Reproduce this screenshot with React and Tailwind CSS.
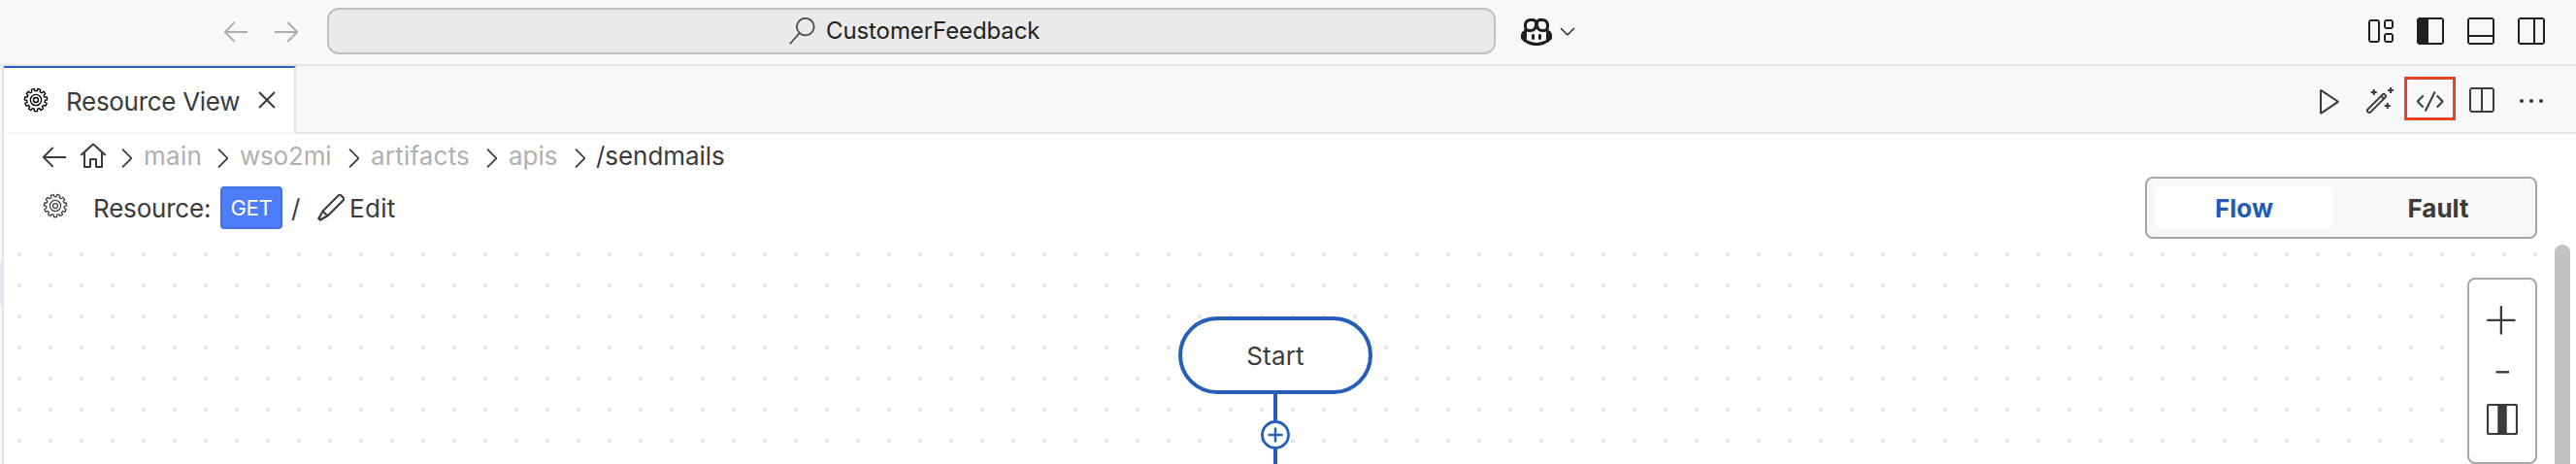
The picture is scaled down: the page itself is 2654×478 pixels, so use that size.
import React from "react";
import {
  VscArrowLeft,
  VscArrowRight,
  VscSearch,
  VscCopilot,
  VscChevronDown,
  VscChevronRight,
  VscLayout,
  VscLayoutSidebarLeft,
  VscLayoutPanelOff,
  VscLayoutSidebarRightOff,
  VscPlay,
  VscWand,
  VscCode,
  VscSplitHorizontal,
  VscEllipsis,
  VscClose,
  VscHome,
  VscEdit,
  VscAdd,
} from "react-icons/vsc";

const TEETH = 11;

// Closed outline of a cog wheel with its first gap at twelve o'clock.
function cogOutline(outer, root) {
  const step = (Math.PI * 2) / TEETH;
  const points = [];
  for (let i = 0; i < TEETH; i++) {
    const middle = -Math.PI / 2 + step * (i + 0.5);
    [
      [-0.3, root],
      [-0.22, outer],
      [0.22, outer],
      [0.3, root],
    ].forEach(([offset, radius]) => {
      const angle = middle + step * offset;
      points.push(`${(14 + radius * Math.cos(angle)).toFixed(2)} ${(14 + radius * Math.sin(angle)).toFixed(2)}`);
    });
  }
  return `M${points.join("L")}Z`;
}

function Gear({ className, stroke }) {
  return (
    <svg viewBox="0 0 28 28" className={className} fill="none" stroke="currentColor" strokeWidth={stroke} strokeLinejoin="round">
      <path d={cogOutline(11.7, 9.4)} />
      <circle cx="14" cy="14" r="5.6" />
      <circle cx="14" cy="14" r="2.5" />
    </svg>
  );
}

function TitleBar() {
  return (
    <header className="flex h-[68px] shrink-0 items-center border-b-2 border-[#e5e5e5] bg-[#f8f8f8] pb-0.5 pl-[227px] text-[#1f1f1f]">
      <VscArrowLeft className="size-8 text-[#adadad]" />
      <VscArrowRight className="ml-5 size-8 text-[#adadad]" />
      <div className="ml-[26px] flex h-12 w-[1204px] items-center rounded-xl border-2 border-[#c1c1c1] bg-[#eaeaea] pl-[473px]">
        <VscSearch className="size-7 text-[#4a4a4a]" />
        <span className="ml-[11px] text-2xl tracking-[-0.1px] whitespace-nowrap">CustomerFeedback</span>
      </div>
      <VscCopilot className="mb-px ml-[26px] size-8" />
      <VscChevronDown className="ml-1 size-6" />
      <div className="mr-[30px] mb-px ml-auto flex gap-5">
        <VscLayout className="size-8" />
        <VscLayoutSidebarLeft className="size-8" />
        <VscLayoutPanelOff className="size-8" />
        <VscLayoutSidebarRightOff className="size-8" />
      </div>
    </header>
  );
}

function TabBar() {
  return (
    <div className="flex h-[70px] shrink-0 bg-[#f8f8f8]">
      <div className="flex w-[301px] shrink-0 items-center border-t-2 border-r-2 border-b-2 border-t-[#265fbb] border-r-[#e5e5e5] border-b-[#f8f8f8] bg-white pl-[19px]">
        <Gear className="size-7 shrink-0 text-black" stroke="1.35" />
        <span className="mt-1 ml-[17px] w-[180px] tracking-[-0.3px] whitespace-nowrap">Resource View</span>
        <VscClose className="ml-[11px] size-8" />
      </div>
      <div className="flex grow items-center justify-end gap-5 border-b-2 border-[#e5e5e5] pt-[3px] pr-[30px]">
        <VscPlay className="size-8" />
        <VscWand className="size-8" />
        <div className="relative size-8">
          <VscCode className="size-8" />
          <span className="absolute -top-[9px] -left-[11px] h-[45px] w-[53px] border-3 border-[#ea4025]" />
        </div>
        <VscSplitHorizontal className="size-8" />
        <VscEllipsis className="size-8" />
      </div>
    </div>
  );
}

function Breadcrumbs() {
  return (
    <nav className="flex h-11 items-center pt-0.5 pl-9 whitespace-nowrap text-[#b0b0b0]">
      <VscArrowLeft className="size-8 text-[#3b3b3b]" />
      <VscHome className="ml-2 size-8 text-[#3b3b3b]" />
      <VscChevronRight className="mt-1 ml-0.5 size-8 text-[#3b3b3b]" />
      <span className="ml-0.5 w-[65px] tracking-[0.3px]">main</span>
      <VscChevronRight className="mt-[3px] size-8 text-[#3b3b3b]" />
      <span className="ml-0.5 w-[101px] tracking-[-0.2px]">wso2mi</span>
      <VscChevronRight className="mt-[3px] size-8 text-[#3b3b3b]" />
      <span className="ml-0.5 w-[108px] tracking-[0.2px]">artifacts</span>
      <VscChevronRight className="mt-[3px] size-8 text-[#3b3b3b]" />
      <span className="ml-0.5 w-[57px]">apis</span>
      <VscChevronRight className="mt-[3px] size-8 text-[#3b3b3b]" />
      <span className="ml-px tracking-[-0.05px] text-[#3b3b3b]">/sendmails</span>
    </nav>
  );
}

function ResourceBar() {
  return (
    <div className="flex h-16 items-center whitespace-nowrap">
      <Gear className="mb-1 ml-[39px] size-7 text-[#3b3b3b]" stroke="1.25" />
      <span className="mt-0.5 ml-[25px] w-[121px] tracking-[-0.2px]">Resource:</span>
      <span className="ml-2.5 flex h-11 w-16 items-center justify-center rounded border-2 border-[#4571e2] bg-[#4d7df9] text-[22px] tracking-[-0.2px] text-white">
        GET
      </span>
      <span className="mt-0.5 ml-[9px] w-2.5">/</span>
      <VscEdit className="ml-[15px] size-8" />
      <span className="mt-0.5 ml-[3px] tracking-[0.3px]">Edit</span>
      <div className="mr-10 ml-auto flex h-16 w-[404px] items-center rounded-lg border-2 border-[#a6a6a6] bg-[#f8f8f8] px-2 font-bold">
        <span className="flex h-11 w-[184px] items-center justify-center rounded-lg bg-white pt-0.5 text-[#265bb5]">Flow</span>
        <span className="ml-4 flex h-11 w-[184px] items-center justify-center pt-0.5">Fault</span>
      </div>
    </div>
  );
}

function ZoomControls() {
  return (
    <div className="absolute top-[38px] right-10 flex h-48 w-[72px] flex-col items-center rounded-lg border-2 border-[#a6a6a6] bg-white pt-[25px] text-[#3b3b3b]">
      <VscAdd className="size-9" />
      <svg viewBox="0 0 36 36" className="mt-4 size-9">
        <path d="M11.5 18.3h13.5" stroke="currentColor" strokeWidth="2.4" />
      </svg>
      <svg viewBox="0 0 32 32" className="mt-[15px] size-8" fill="none" stroke="currentColor">
        <rect x="1" y="1" width="30" height="30" rx="1.5" strokeWidth="2.2" />
        <path d="M16 1v30" strokeWidth="9.5" />
      </svg>
    </div>
  );
}

function Diagram() {
  return (
    <main className="relative mt-0.5 grow overflow-hidden bg-[conic-gradient(from_270deg_at_4px_4px,#e5eaee_90deg,transparent_0)] bg-[length:32px_32px] bg-[position:14px_12px]">
      <div className="absolute top-[78px] left-[1210px] flex w-[200px] flex-col items-center">
        <div className="flex h-20 w-full items-center justify-center rounded-full border-4 border-[#265fb8] bg-white pt-0.5 tracking-[0.2px]">
          Start
        </div>
        <svg viewBox="0 0 40 72" className="h-[72px] w-10" fill="none" stroke="#265fb8">
          <path d="M20 0v72" strokeWidth="4" />
          <circle cx="20" cy="42" r="13.5" fill="#fff" strokeWidth="2.8" />
          <path d="M20 35.5v13M13.5 42h13" strokeWidth="2.4" strokeLinecap="round" />
        </svg>
      </div>
      <ZoomControls />
      <span className="absolute top-1 right-1.5 h-80 w-4 rounded-full bg-[#c1c1c1]" />
    </main>
  );
}

export default function App() {
  return (
    <div className="flex h-[478px] w-[2654px] flex-col overflow-hidden bg-white font-['Inter',sans-serif] text-[26px] leading-none text-[#3b3b3b]">
      <TitleBar />
      <div className="flex min-h-0 grow">
        <aside className="w-1 shrink-0 border-r-2 border-[#e5e5e5] bg-[#f8f8f8] pt-[202px]">
          <div className="h-11 bg-[#e4e6f1]" />
        </aside>
        <section className="flex grow flex-col">
          <TabBar />
          <Breadcrumbs />
          <ResourceBar />
          <Diagram />
        </section>
      </div>
    </div>
  );
}
